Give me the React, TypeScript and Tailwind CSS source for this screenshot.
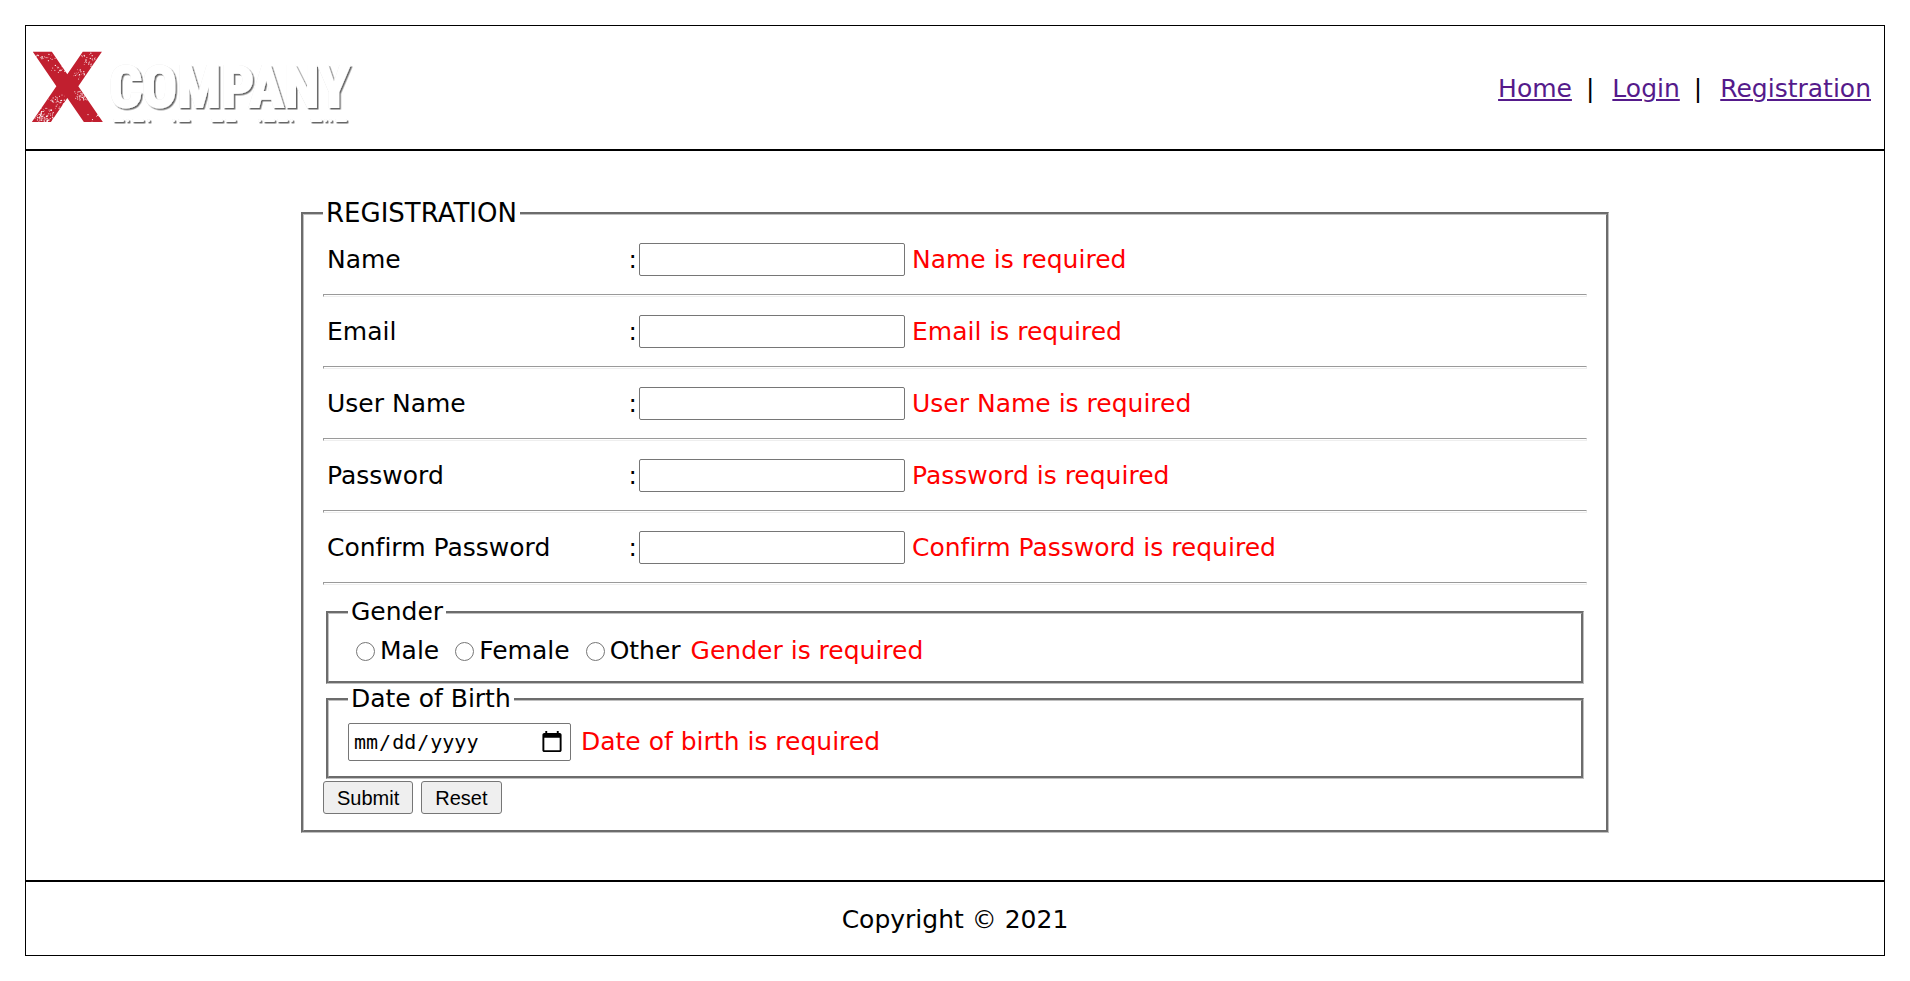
import React from "react";

type Field = { id: string; label: string; type: string };

const fields: Field[] = [
  { id: "name", label: "Name", type: "text" },
  { id: "email", label: "Email", type: "text" },
  { id: "username", label: "User Name", type: "text" },
  { id: "password", label: "Password", type: "password" },
  { id: "confirm-password", label: "Confirm Password", type: "password" },
];

const genders = ["Male", "Female", "Other"];

// Rounded dashes under the word mark: [x, width]
const dashes: [number, number][] = [
  [82, 11], [95, 3], [101, 12], [116, 3], [141, 3], [147, 12], [180, 12], [194, 11],
  [227, 3], [232, 12], [246, 11], [259, 3], [279, 12], [293, 3], [298, 3], [304, 12],
];

// Worn patches of the X: [centre x, centre y, spread x, spread y, count]
const patches: [number, number, number, number, number][] = [
  [12, 66, 14, 9, 120],
  [26, 52, 10, 8, 35],
  [50, 46, 7, 5, 50],
  [12, 7, 14, 4, 30],
  [58, 10, 12, 8, 35],
  [28, 20, 8, 5, 20],
  [48, 24, 8, 6, 25],
  [64, 66, 12, 8, 10],
];

function makeSpecks() {
  let seed = 7;
  const next = () => {
    seed = (seed * 16807) % 2147483647;
    return seed / 2147483647;
  };
  const out: { x: number; y: number; r: number }[] = [];
  for (const [cx, cy, sx, sy, count] of patches) {
    for (let i = 0; i < count; i++) {
      out.push({
        x: cx + (next() + next() - 1) * sx,
        y: cy + (next() + next() - 1) * sy,
        r: 0.3 + next() * 0.35,
      });
    }
  }
  return out;
}

const specks = makeSpecks();

function Logo() {
  return (
    <svg width="330" height="120" viewBox="0 0 330 120" role="img" aria-label="XCompany">
      <defs>
        <filter id="lift" x="-5%" y="-10%" width="110%" height="130%">
          <feDropShadow dx="0" dy="0" stdDeviation="0.4" floodColor="#000" floodOpacity="0.25" />
          <feDropShadow dx="1.5" dy="1.5" stdDeviation="0.6" floodColor="#000" floodOpacity="0.6" />
        </filter>
      </defs>
      <text x="-1" y="94" fontSize="97" className="fill-[#c11f2f] font-['DejaVu_Sans',sans-serif] font-bold">
        X
      </text>
      {specks.map((s, i) => (
        <circle key={i} cx={s.x} cy={s.y + 22} r={s.r} fill="#fff" />
      ))}
      <g filter="url(#lift)" fill="#fff">
        <text
          x="78"
          y="79"
          fontSize="58"
          stroke="#fff"
          strokeWidth="2"
          className="font-['Roboto_Condensed','Open_Sans_Condensed',sans-serif] font-bold"
        >
          COMPANY
        </text>
        {dashes.map(([x, w]) => (
          <rect key={x} x={x} y="91" width={w} height="3" rx="1.5" />
        ))}
      </g>
    </svg>
  );
}

function ErrorText({ children }: { children: React.ReactNode }) {
  return <span className="text-[#ff0000]">{children}</span>;
}

const groove = "border-[3px] [border-style:groove] border-[#c0c0c0]";
const box = "rounded-[2px] border border-[#767676] bg-white";
const button = "h-[33px] rounded-[3px] border border-[#767676] bg-[#efefef] px-[13px] font-['Liberation_Sans',Arial,sans-serif] text-[20px] leading-6";

export default function App() {
  return (
    <div className="p-[25px] font-['DejaVu_Sans',Verdana,sans-serif] text-[25px] leading-[30px] text-black [font-variant-ligatures:none]">
      <div className="border border-black">
        <header className="flex h-[125px] items-center justify-between border-b-2 border-black pr-[13px] pl-[5px]">
          <Logo />
          <nav className="flex items-center pt-[3px] text-[#551a8b]">
            <a href="#home" className="underline decoration-2 underline-offset-2">Home</a>
            <span className="mr-[18px] ml-[14px] text-black">|</span>
            <a href="#login" className="underline decoration-2 underline-offset-2">Login</a>
            <span className="mr-[18px] ml-[14px] text-black">|</span>
            <a href="#registration" className="underline decoration-2 underline-offset-2">Registration</a>
          </nav>
        </header>

        <main className="py-[47px]">
          <form className="mx-auto w-full max-w-[1308px]" onSubmit={(e) => e.preventDefault()}>
            <fieldset className={`${groove} px-[19px] pt-[15px] pb-4`}>
              <legend className="px-[3px] text-[26px]">REGISTRATION</legend>

              {fields.map((f) => (
                <div key={f.id}>
                  <div className="grid grid-cols-[304px_12px_266px_1fr] items-center">
                    <label htmlFor={f.id} className="pl-1">{f.label}</label>
                    <span className="pr-[2px] text-right">:</span>
                    <input id={f.id} type={f.type} className={`h-[33px] w-full px-1 text-[20px] ${box}`} />
                    <span className="pl-[7px]">
                      <ErrorText>{f.label} is required</ErrorText>
                    </span>
                  </div>
                  <hr className="my-[18px] h-[3px] border border-t-[#9a9a9a] border-r-[#eeeeee] border-b-[#eeeeee] border-l-[#9a9a9a]" />
                </div>
              ))}

              <fieldset className={`${groove} mx-[3px] -mt-[6px] px-[19px] pt-[9px] pb-[15px]`}>
                <legend className="px-[3px]">Gender</legend>
                <div className="flex items-center pl-2">
                  {genders.map((g) => (
                    <label key={g} className="mr-4 flex items-center gap-[5px] last-of-type:mr-[10px]">
                      <input type="radio" name="gender" value={g} className="size-[19px]" />
                      {g}
                    </label>
                  ))}
                  <ErrorText>Gender is required</ErrorText>
                </div>
              </fieldset>

              <fieldset className={`${groove} mx-[3px] px-[19px] pt-[9px] pb-[15px]`}>
                <legend className="px-[3px]">Date of Birth</legend>
                <div className="flex items-center gap-[10px]">
                  <input
                    type="date"
                    aria-label="Date of Birth"
                    className={`h-[38px] w-[223px] px-1 font-['DejaVu_Sans_Mono',Consolas,monospace] text-[20px] [&::-webkit-calendar-picker-indicator]:size-6 ${box}`}
                  />
                  <ErrorText>Date of birth is required</ErrorText>
                </div>
              </fieldset>

              <div className="mt-[2px] flex gap-2">
                <button type="submit" className={button}>Submit</button>
                <button type="reset" className={button}>Reset</button>
              </div>
            </fieldset>
          </form>
        </main>

        <footer className="border-t-2 border-black pt-[23px] pb-5 text-center">Copyright © 2021</footer>
      </div>
    </div>
  );
}
